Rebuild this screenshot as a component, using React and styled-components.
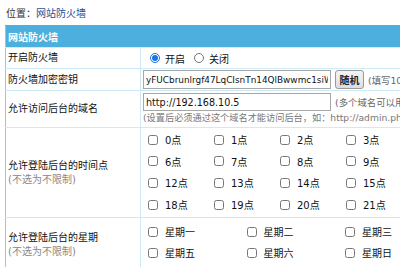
import React from "react";
import styled, { createGlobalStyle } from "styled-components";

const GlobalStyle = createGlobalStyle`
  body {
    margin: 0;
    overflow: hidden;
    background: #fff;
    font-family: "DejaVu Sans", "Noto Sans CJK SC", sans-serif;
    font-size: 10px;
    color: #111;
  }
`;

const Page = styled.div`
  padding: 5px 0 0 5px;
  width: 700px;
`;

const Crumb = styled.div`
  line-height: 18px;
  padding-left: 1px;
  color: #333;
  span {
    color: #1f4f96;
  }
`;

const Table = styled.table`
  margin-top: 2px;
  width: 660px;
  border-collapse: collapse;
  border-left: 1px solid #8ccbea;
  table-layout: fixed;
`;

const HeadCell = styled.th`
  height: 21px;
  padding: 0 2px;
  background: #4dafdd;
  color: #fff;
  font-weight: bold;
  text-align: left;
  border-top: 1px solid #4dafdd;
`;

const Row = styled.tr`
  td {
    border-top: 1px solid #cdeaf7;
  }
`;

const Label = styled.td`
  height: ${({ h }) => h || 20}px;
  padding: 0 2px;
  border-right: 1px solid #cdeaf7;
  vertical-align: middle;
  line-height: 14px;
`;

const Hint = styled.div`
  color: #888;
`;

const Field = styled.td`
  padding: ${({ pad }) => pad || "0 0 0 2px"};
  vertical-align: middle;
  white-space: nowrap;
`;

const RadioGroup = styled.div`
  display: flex;
  align-items: center;
  padding-left: 7px;
`;

const Choice = styled.label`
  display: inline-flex;
  align-items: center;
  gap: 5px;
  margin-right: ${({ mr }) => mr || 0}px;
  input {
    width: 10px;
    height: 10px;
    margin: 0;
    accent-color: #1a73e8;
  }
`;

const Line = styled.div`
  display: flex;
  align-items: center;
`;

const TextInput = styled.input`
  box-sizing: border-box;
  width: 188px;
  height: ${({ h }) => h || 19}px;
  padding: 0 2px;
  border: 1px solid #a7a7a7;
  font-family: "DejaVu Sans", sans-serif;
  font-size: ${({ fs }) => fs || 9.6}px;
  color: #111;
  outline: none;
`;

const Button = styled.button`
  margin-left: 4px;
  height: 19px;
  width: 29px;
  padding: 0;
  border: 1px solid #9a9a9a;
  border-radius: 3px;
  background: linear-gradient(#f4f4f4, #dedede);
  font-family: "Noto Sans CJK SC", sans-serif;
  font-size: 10px;
  font-weight: bold;
  color: #222;
`;

const Note = styled.span`
  margin-left: 4px;
  font-size: 9.4px;
  color: #666;
`;

const SubNote = styled.div`
  line-height: 14px;
  font-size: 9.2px;
  color: #777;
`;

const Grid = styled.div`
  display: grid;
  grid-template-columns: repeat(${({ cols }) => cols}, ${({ w }) => w}px);
  grid-auto-rows: ${({ rh }) => rh}px;
`;

const Check = styled.label`
  display: flex;
  align-items: center;
  gap: 7px;
  padding-left: 7px;
  input {
    width: 10px;
    height: 10px;
    margin: 0;
  }
`;

const hours = Array.from({ length: 24 }, (_, i) => `${i}点`);
const days = ["星期一", "星期二", "星期三", "星期四", "星期五", "星期六", "星期日"];

export default function App() {
  return (
    <Page>
      <GlobalStyle />
      <Crumb>
        位置：<span>网站防火墙</span>
      </Crumb>
      <Table>
        <colgroup>
          <col style={{ width: 135 }} />
          <col />
        </colgroup>
        <thead>
          <tr>
            <HeadCell colSpan={2}>网站防火墙</HeadCell>
          </tr>
        </thead>
        <tbody>
          <Row>
            <Label>开启防火墙</Label>
            <Field>
              <RadioGroup>
                <Choice mr={9}>
                  <input type="radio" name="fw" defaultChecked /> 开启
                </Choice>
                <Choice>
                  <input type="radio" name="fw" /> 关闭
                </Choice>
              </RadioGroup>
            </Field>
          </Row>
          <Row>
            <Label h={21}>防火墙加密密钥</Label>
            <Field>
              <Line>
                <TextInput fs={8.9} defaultValue="yFUCbrunlrgf47LqCIsnTn14QlBwwmc1siW" />
                <Button>随机</Button>
                <Note>(填写10位以上的字符串，防火墙加密使用)</Note>
              </Line>
            </Field>
          </Row>
          <Row>
            <Label h={35}>允许访问后台的域名</Label>
            <Field pad="2px 0 2px 2px">
              <Line>
                <TextInput h={18} defaultValue="http://192.168.10.5" />
                <Note>(多个域名可以用英文逗号隔开)</Note>
              </Line>
              <SubNote>
                (设置后必须通过这个域名才能访问后台，如：http://admin.phpcms.cn)
              </SubNote>
            </Field>
          </Row>
          <Row>
            <Label>
              允许登陆后台的时间点
              <Hint>(不选为不限制)</Hint>
            </Label>
            <Field pad="1px 0 2px 0">
              <Grid cols={6} w={66} rh={21.6}>
                {hours.map((h) => (
                  <Check key={h}>
                    <input type="checkbox" />
                    {h}
                  </Check>
                ))}
              </Grid>
            </Field>
          </Row>
          <Row>
            <Label>
              允许登陆后台的星期
              <Hint>(不选为不限制)</Hint>
            </Label>
            <Field pad="3px 0 8px 0">
              <Grid cols={4} w={98.5} rh={21}>
                {days.map((d) => (
                  <Check key={d}>
                    <input type="checkbox" />
                    {d}
                  </Check>
                ))}
              </Grid>
            </Field>
          </Row>
        </tbody>
      </Table>
    </Page>
  );
}
